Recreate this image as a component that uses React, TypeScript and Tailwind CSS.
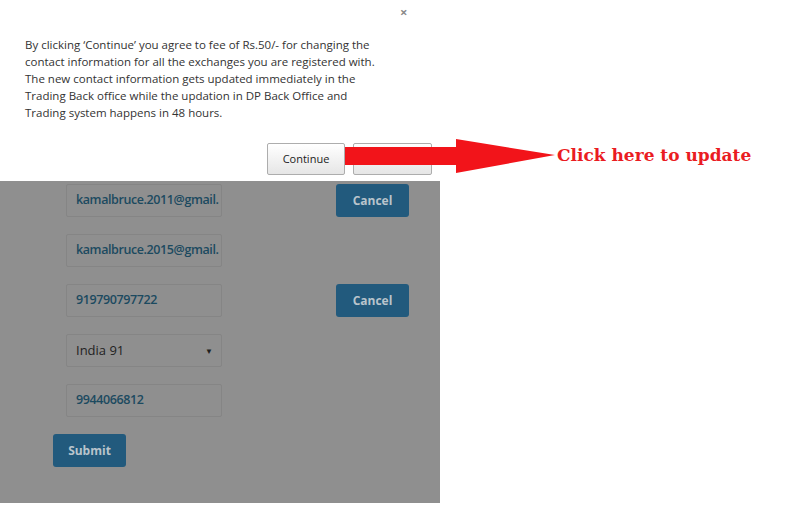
import { useState } from 'react'

const fieldFont = { fontFamily: '"Open Sans", "Liberation Sans", sans-serif' }

function Field({ value }: { value: string }) {
  return (
    <div className="w-[156px] h-[33px] border border-[#858585] rounded-[2px] bg-[#8f8f8f] flex items-center pl-[9px] overflow-hidden whitespace-nowrap">
      <span className="text-[12.5px] font-semibold text-[#1c4a60] tracking-[-0.4px]">{value}</span>
    </div>
  )
}

function CancelButton() {
  return (
    <button className="w-[73px] h-[33px] rounded-[3px] bg-[#225a7d] text-[12px] font-bold text-[#b9c4cc]">
      Cancel
    </button>
  )
}

export default function App() {
  const [country] = useState('India 91')

  return (
    <div className="relative w-[800px] h-[512px] bg-white overflow-hidden" style={fieldFont}>
      <div className="w-[440px] flex flex-col">
        {/* confirmation dialog */}
        <div className="h-[181px] relative">
          <div className="absolute left-[400px] top-[3px] text-[13px] text-[#8a8a8a] font-bold">×</div>
          <p
            className="pt-[36px] pl-[25px] text-[11.5px] leading-[17px] text-[#333]"
            style={{ fontFamily: '"Open Sans", sans-serif' }}
          >
            By clicking ‘Continue’ you agree to fee of Rs.50/- for changing the
            <br />
            contact information for all the exchanges you are registered with.
            <br />
            The new contact information gets updated immediately in the
            <br />
            Trading Back office while the updation in DP Back Office and
            <br />
            Trading system happens in 48 hours.
          </p>
          <div className="flex gap-[8px] pl-[267px] pt-[22px]">
            <button className="w-[78px] h-[32px] border border-[#adadad] rounded-[2px] bg-gradient-to-b from-white to-[#e6e6e6] text-[11px] text-[#222]">
              Continue
            </button>
            <button className="w-[79px] h-[32px] border border-[#adadad] rounded-[2px] bg-gradient-to-b from-white to-[#e6e6e6]" />
          </div>
        </div>

        {/* dimmed form */}
        <div className="h-[322px] bg-[#8f8f8f] pt-[3px] flex flex-col gap-[17px]">
          <div className="flex pl-[66px]">
            <Field value="kamalbruce.2011@gmail." />
            <div className="w-[114px]" />
            <CancelButton />
          </div>
          <div className="flex pl-[66px]">
            <Field value="kamalbruce.2015@gmail." />
          </div>
          <div className="flex pl-[66px]">
            <Field value="919790797722" />
            <div className="w-[114px]" />
            <CancelButton />
          </div>
          <div className="flex pl-[66px]">
            <div className="w-[156px] h-[33px] border border-[#858585] rounded-[2px] flex items-center justify-between pl-[9px] pr-[8px]">
              <span className="text-[13px] text-[#1f1f1f]">{country}</span>
              <span className="text-[8px] text-[#1f1f1f]">▼</span>
            </div>
          </div>
          <div className="flex pl-[66px]">
            <Field value="9944066812" />
          </div>
          <div className="pl-[53px]">
            <button className="w-[73px] h-[33px] rounded-[3px] bg-[#225a7d] text-[12px] font-bold text-[#b9c4cc]">
              Submit
            </button>
          </div>
        </div>
      </div>

      {/* annotation arrow */}
      <svg className="absolute left-[345px] top-[139px]" width="212" height="35" viewBox="0 0 212 35">
        <polygon points="0,8 111,8 111,0 210,16 111,34 111,26 0,26" fill="#f2141a" />
      </svg>
      <div
        className="absolute left-[557px] top-[144px] text-[17px] font-bold text-[#ea1c22] leading-[22px]"
        style={{ fontFamily: '"DejaVu Serif", serif' }}
      >
        Click here to update
      </div>
    </div>
  )
}
